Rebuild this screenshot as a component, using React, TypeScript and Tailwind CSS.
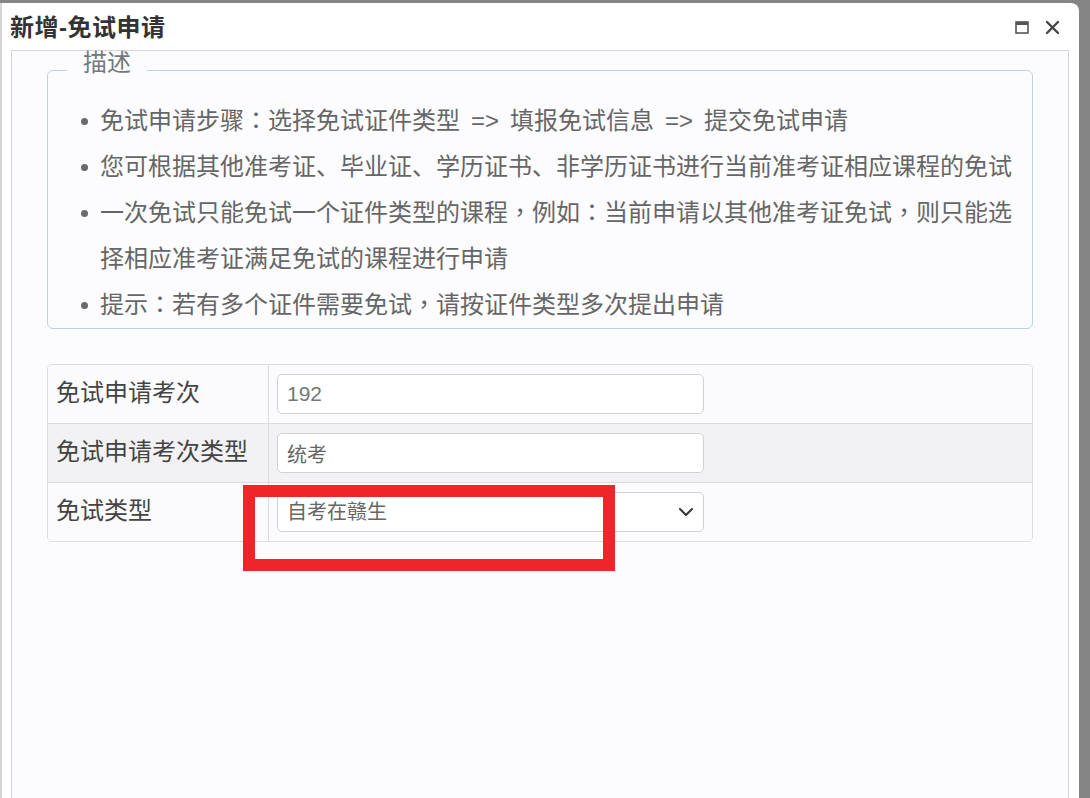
import React from "react";

const notes = [
  "免试申请步骤：选择免试证件类型 => 填报免试信息 => 提交免试申请",
  "您可根据其他准考证、毕业证、学历证书、非学历证书进行当前准考证相应课程的免试",
  "一次免试只能免试一个证件类型的课程，例如：当前申请以其他准考证免试，则只能选择相应准考证满足免试的课程进行申请",
  "提示：若有多个证件需要免试，请按证件类型多次提出申请",
];

const font = "font-['Liberation_Sans','Noto_Sans_CJK_SC',sans-serif]";

// centred full-width punctuation and spaced arrows, like the original page font
function renderNote(text: string) {
  return text.split(/( => |：|，)/).map((part, i) => {
    if (part === " => ") {
      return (
        <span key={i} className="px-[11px]">
          =&gt;
        </span>
      );
    }
    if (part === "：" || part === "，") {
      return (
        <span key={i} className="font-['Noto_Sans_CJK_TC',sans-serif] leading-none">
          {part}
        </span>
      );
    }
    return <React.Fragment key={i}>{part}</React.Fragment>;
  });
}

function MaxIcon() {
  return (
    <svg width="14" height="13" viewBox="0 0 14 13" className="text-[#555]">
      <rect x="1" y="1" width="12" height="11" fill="none" stroke="currentColor" strokeWidth="1.6" />
      <rect x="1" y="1" width="12" height="3" fill="currentColor" />
    </svg>
  );
}

function CloseIcon() {
  return (
    <svg width="15" height="15" viewBox="0 0 15 15" className="text-[#444]">
      <path d="M2 2 L13 13 M13 2 L2 13" stroke="currentColor" strokeWidth="2.4" strokeLinecap="round" />
    </svg>
  );
}

function Row({ label, shaded, children }: { label: string; shaded?: boolean; children: React.ReactNode }) {
  return (
    <div className={`flex border-t border-[#dcdce0] first:border-t-0 ${shaded ? "bg-[#f2f2f4]" : "bg-[#fbfbfd]"}`}>
      <div className="w-[221px] shrink-0 border-r border-[#dcdce0] flex items-center pl-[8px] pb-[2px] text-[24px] leading-[30px] text-[#444]">
        {label}
      </div>
      <div className="flex-1 px-[8px] py-[9px]">{children}</div>
    </div>
  );
}

export default function App() {
  return (
    <div className={`w-[1090px] h-[798px] overflow-hidden bg-[#858585] pt-[3px] flex ${font}`}>
      <div className="w-[2px] bg-[#d6d6d6]" />
      <div className="w-[1077px] bg-white rounded-tr-[8px] flex flex-col">
        {/* header */}
        <div className="h-[47px] shrink-0 flex items-center justify-between pl-[8px] pr-[19px] pt-[3px]">
          <span className="text-[24px] font-bold text-[#333] leading-[30px] tracking-[0.5px]">新增-免试申请</span>
          <div className="flex items-center gap-[16px] pb-[2px]">
            <MaxIcon />
            <CloseIcon />
          </div>
        </div>

        {/* body */}
        <div className="ml-[9px] w-[1058px] flex-1 border border-b-0 border-[#d6d6da] bg-[#fcfcfe] px-[35px]">
          <fieldset className="border border-[#bcd3dc] rounded-[6px]">
            <legend className="ml-[19px] px-[16px] pb-[14px] text-[24px] leading-6 text-[#777]">描述</legend>
            <ul className="pt-[9px] pr-[12px]">
              {notes.map((n) => (
                <li key={n} className="flex items-start text-[24px] leading-[46px] text-[#666]">
                  <span className="h-[46px] ml-[33px] mr-[12px] flex items-center shrink-0">
                    <span className="w-[7px] h-[7px] rounded-full bg-[#6a6a6a]" />
                  </span>
                  <span className="flex-1">{renderNote(n)}</span>
                </li>
              ))}
            </ul>
          </fieldset>

          <div className="relative mt-[35px]">
            <div className="border border-[#dcdce0] rounded-[5px] overflow-hidden">
              <Row label="免试申请考次">
                <input
                  readOnly
                  value="192"
                  className="w-[427px] h-[40px] rounded-[5px] border border-[#d2d2d6] bg-white px-[9px] text-[21px] text-[#777] outline-none"
                />
              </Row>
              <Row label="免试申请考次类型" shaded>
                <input
                  readOnly
                  value="统考"
                  className="w-[427px] h-[40px] rounded-[5px] border border-[#d2d2d6] bg-white px-[9px] text-[20px] text-[#666] outline-none"
                />
              </Row>
              <Row label="免试类型">
                <div className="w-[427px] h-[40px] rounded-[5px] border border-[#d2d2d6] bg-white pl-[9px] pr-[9px] flex items-center justify-between text-[20px] text-[#666]">
                  <span>自考在赣生</span>
                  <svg width="16" height="10" viewBox="0 0 16 10">
                    <path d="M2 2 L8 8 L14 2" fill="none" stroke="#333" strokeWidth="2" strokeLinecap="round" strokeLinejoin="round" />
                  </svg>
                </div>
              </Row>
            </div>
            {/* highlight box */}
            <div className="absolute left-[196px] top-[121px] w-[372px] h-[86px] border-[12px] border-[#f0252a] pointer-events-none" />
          </div>
        </div>
      </div>
    </div>
  );
}
